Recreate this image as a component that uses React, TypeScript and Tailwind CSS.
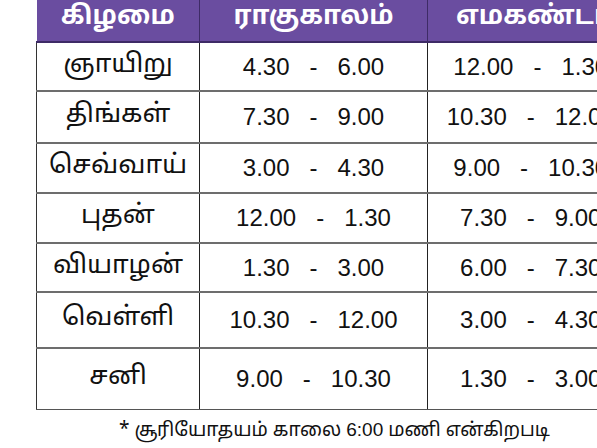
import React from 'react'

const rows = [
  ['ஞாயிறு', '4.30', '6.00', '12.00', '1.30', 'h-[49px]'],
  ['திங்கள்', '7.30', '9.00', '10.30', '12.00', 'h-[52px]'],
  ['செவ்வாய்', '3.00', '4.30', '9.00', '10.30', 'h-[50px]'],
  ['புதன்', '12.00', '1.30', '7.30', '9.00', 'h-[50px]'],
  ['வியாழன்', '1.30', '3.00', '6.00', '7.30', 'h-[49px]'],
  ['வெள்ளி', '10.30', '12.00', '3.00', '4.30', 'h-[56px]'],
  ['சனி', '9.00', '10.30', '1.30', '3.00', 'h-[61px]'],
]

const tamil = "font-['Noto_Sans_Tamil','Noto_Sans',sans-serif]"
const num = "font-['Liberation_Sans',Arial,sans-serif]"

export default function App() {
  return (
    <div className="w-[597px] h-[448px] overflow-hidden bg-white">
      <div className="ml-[36px] w-[597px]">
        <table className="border-collapse table-fixed w-[597px]">
          <colgroup>
            <col className="w-[163px]" />
            <col className="w-[228px]" />
            <col className="w-[206px]" />
          </colgroup>
          <thead>
            <tr className="h-[42px] bg-[#6a4da0] text-white">
              <th className={`${tamil} border-b-2 border-b-[#3e2b66] border-r border-r-[#3e2b66] text-[26px] font-bold leading-none pb-[6px]`}>கிழமை</th>
              <th className={`${tamil} border-b-2 border-b-[#3e2b66] border-r border-r-[#3e2b66] text-[26px] font-bold leading-none pb-[6px]`}>ராகுகாலம்</th>
              <th className={`${tamil} border-b-2 border-b-[#3e2b66] text-[26px] font-bold leading-none pb-[6px] text-left pl-[28px] whitespace-nowrap`}>எமகண்டம்</th>
            </tr>
          </thead>
          <tbody>
            {rows.map(([day, a, b, c, d, h], i) => {
              const line = i < rows.length - 1 ? 'border-b-2 border-b-[#6d6d6d]' : 'border-b border-b-[#555]'
              return (
                <tr key={day} className={h}>
                  <td className={`${tamil} ${line} border-l border-l-[#333] border-r border-r-[#222] text-center text-[26px] text-[#111] leading-none p-0 pb-[2px]`}>{day}</td>
                  <td className={`${num} ${line} border-r border-r-[#222] text-center text-[24px] text-[#111] leading-none p-0 whitespace-pre`}>{`${a}   -   ${b}`}</td>
                  <td className={`${num} ${line} text-center text-[24px] text-[#111] leading-none p-0 whitespace-pre`}>{`${c}   -   ${d}`}</td>
                </tr>
              )
            })}
          </tbody>
        </table>
        <div className={`${tamil} text-center text-[19px] text-[#111] leading-none pt-[10px] whitespace-nowrap`}>
          * சூரியோதயம் காலை <span className={num}>6:00</span> மணி என்கிறபடி
        </div>
      </div>
    </div>
  )
}
